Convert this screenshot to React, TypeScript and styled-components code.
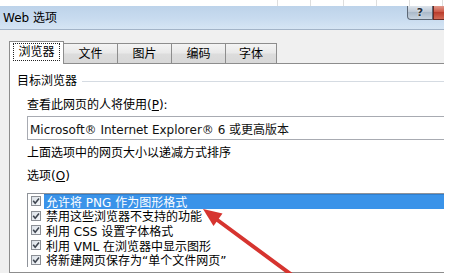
import React from "react";
import styled, { createGlobalStyle } from "styled-components";

const GlobalStyle = createGlobalStyle`
  html, body {
    margin: 0;
    padding: 0;
    background: #fff;
  }
  body {
    font-family: "DejaVu Sans", "Noto Sans CJK SC", sans-serif;
    font-size: 12px;
    color: #111;
  }
`;

const Screen = styled.div`
  position: relative;
  width: 458px;
  height: 273px;
  overflow: hidden;
  background: #fff;
`;

const TopStrip = styled.div`
  height: 6px;
  margin-left: 245px;
  background-image: repeating-linear-gradient(
    to right,
    transparent 0 32px,
    #dedede 32px 33px
  );
`;

const Dialog = styled.div`
  width: 444px;
  height: 267px;
  overflow: hidden;
  display: flex;
  flex-direction: column;
  background: #f0f0f0;
`;

const TitleBar = styled.div`
  height: 23px;
  flex: none;
  border-bottom: 1px solid #a3b4c8;
  background: linear-gradient(to bottom, #bdd3ea 0%, #c8dbef 55%, #d6e5f4 100%);
  display: flex;
  align-items: flex-start;
`;

const Title = styled.span`
  align-self: center;
  padding-left: 3px;
  line-height: 14px;
  color: #000;
`;

const Caption = styled.div`
  margin-left: auto;
  margin-top: -1px;
  display: flex;
`;

const HelpButton = styled.div`
  width: 26px;
  height: 15px;
  box-sizing: border-box;
  border: 1px solid #5d6876;
  border-top: none;
  border-bottom-left-radius: 4px;
  background: linear-gradient(to bottom, #e2e8ef 0%, #bcc8d5 50%, #a9b8c8 51%, #c8d4e0 100%);
  display: flex;
  align-items: center;
  justify-content: center;
  font: bold 11px "DejaVu Sans", sans-serif;
  color: #28303a;
  text-shadow: 0 0 2px #fff;
`;

const CloseButton = styled.div`
  width: 11px;
  height: 15px;
  box-sizing: border-box;
  border-bottom: 1px solid #6b2a24;
  border-left: 1px solid #6b2a24;
  background: linear-gradient(to bottom, #e4a396 0%, #cc5644 50%, #b93a2a 51%, #d26a55 100%);
`;

const Body = styled.div`
  flex: 1;
  padding: 11px 0 0 9px;
  display: flex;
  flex-direction: column;
`;

const TabStrip = styled.div`
  display: flex;
  align-items: flex-end;
  height: 22px;
  flex: none;
  position: relative;
  z-index: 1;
`;

const Tab = styled.div<{ $active?: boolean; $w: number }>`
  box-sizing: border-box;
  width: ${(p) => p.$w}px;
  height: ${(p) => (p.$active ? 23 : 20)}px;
  margin-bottom: ${(p) => (p.$active ? -1 : 0)}px;
  margin-right: -1px;
  border: 1px solid #8d8d8d;
  border-bottom: none;
  position: relative;
  z-index: ${(p) => (p.$active ? 2 : 1)};
  background: ${(p) =>
    p.$active
      ? "#fff"
      : "linear-gradient(to bottom, #f4f4f4 0%, #e9e9e9 45%, #dcdcdc 55%, #d8d8d8 100%)"};
  display: flex;
  align-items: center;
  justify-content: center;
  line-height: 14px;
  color: #000;
`;

const FocusBox = styled.span`
  display: inline-block;
  border: 1px dotted #222;
  padding: 2px 4px;
  line-height: 12px;
  margin-top: -2px;
`;

const Panel = styled.div`
  width: 480px;
  flex: 1;
  box-sizing: border-box;
  background: #fff;
  border: 1px solid #8d8d8d;
  padding: 10px 0 0 7px;
  display: flex;
  flex-direction: column;
`;

const GroupHeader = styled.div`
  display: flex;
  align-items: center;
  gap: 5px;
  line-height: 14px;
  color: #000;
`;

const GroupLine = styled.div`
  flex: 1;
  height: 1px;
  background: #d5dbe2;
`;

const Indent = styled.div`
  margin-left: 10px;
  display: flex;
  flex-direction: column;
`;

const Label = styled.div<{ $gap: number }>`
  margin-top: ${(p) => p.$gap}px;
  line-height: 14px;
  color: #000;
  white-space: nowrap;
`;

const Key = styled.span`
  text-decoration: underline;
`;

const SelectBox = styled.div`
  margin-top: 4px;
  height: 24px;
  box-sizing: border-box;
  border: 1px solid #a8abb2;
  border-right: none;
  padding-left: 2px;
  display: flex;
  align-items: center;
  white-space: nowrap;
  color: #111;
`;

const ListBox = styled.div`
  margin-top: 10px;
  border: 1px solid #8f939a;
  border-right: none;
  border-bottom: none;
  display: flex;
  flex-direction: column;
`;

const Row = styled.div`
  height: 14.6px;
  display: flex;
  align-items: center;
  padding-left: 3px;
`;

const RowText = styled.span<{ $selected?: boolean }>`
  flex: 1;
  margin-left: 3px;
  padding: 0 2px;
  height: 100%;
  display: flex;
  align-items: center;
  white-space: nowrap;
  color: ${(p) => (p.$selected ? "#fff" : "#000")};
  background: ${(p) => (p.$selected ? "#3a93e9" : "transparent")};
  border-top: ${(p) => (p.$selected ? "1px solid #2f7fcf" : "none")};
  box-sizing: border-box;
`;

const Overlay = styled.svg`
  position: absolute;
  left: 0;
  top: 0;
  pointer-events: none;
`;

const Check = () => (
  <svg width="10" height="10" viewBox="0 0 10 10">
    <defs>
      <linearGradient id="cb" x1="0" y1="0" x2="1" y2="1">
        <stop offset="0" stopColor="#d9dfe6" />
        <stop offset="1" stopColor="#f7f9fb" />
      </linearGradient>
    </defs>
    <rect x="0.5" y="0.5" width="9" height="9" fill="url(#cb)" stroke="#8b8f95" />
    <path d="M2.2 4.8 L4.2 7.2 L8 2.6" fill="none" stroke="#3f4650" strokeWidth="1.6" />
  </svg>
);

const options = [
  "允许将 PNG 作为图形格式",
  "禁用这些浏览器不支持的功能",
  "利用 CSS 设置字体格式",
  "利用 VML 在浏览器中显示图形",
  "将新建网页保存为“单个文件网页”",
];

const tabs = [
  { label: "浏览器", w: 55 },
  { label: "文件", w: 55 },
  { label: "图片", w: 55 },
  { label: "编码", w: 55 },
  { label: "字体", w: 52 },
];

export default function App() {
  return (
    <Screen>
      <GlobalStyle />
      <TopStrip />
      <Dialog>
        <TitleBar>
          <Title>Web 选项</Title>
          <Caption>
            <HelpButton>?</HelpButton>
            <CloseButton />
          </Caption>
        </TitleBar>
        <Body>
          <TabStrip>
            {tabs.map((t, i) => (
              <Tab key={t.label} $active={i === 0} $w={t.w}>
                {i === 0 ? <FocusBox>{t.label}</FocusBox> : t.label}
              </Tab>
            ))}
          </TabStrip>
          <Panel>
            <GroupHeader>
              目标浏览器
              <GroupLine />
            </GroupHeader>
            <Indent>
              <Label $gap={10}>
                查看此网页的人将使用(<Key>P</Key>):
              </Label>
              <SelectBox>Microsoft® Internet Explorer® 6 或更高版本</SelectBox>
              <Label $gap={6}>上面选项中的网页大小以递减方式排序</Label>
              <Label $gap={9}>
                选项(<Key>O</Key>)
              </Label>
              <ListBox>
                {options.map((o, i) => (
                  <Row key={o}>
                    <Check />
                    <RowText $selected={i === 0}>{o}</RowText>
                  </Row>
                ))}
              </ListBox>
            </Indent>
          </Panel>
        </Body>
      </Dialog>
      <Overlay width="458" height="273" viewBox="0 0 458 273">
        <path
          d="M216 219 L300 281"
          stroke="#d6342f"
          strokeWidth="4"
          strokeLinecap="round"
        />
        <path d="M203 209 L222.5 213.5 L213.5 226 Z" fill="#d6342f" />
      </Overlay>
    </Screen>
  );
}
